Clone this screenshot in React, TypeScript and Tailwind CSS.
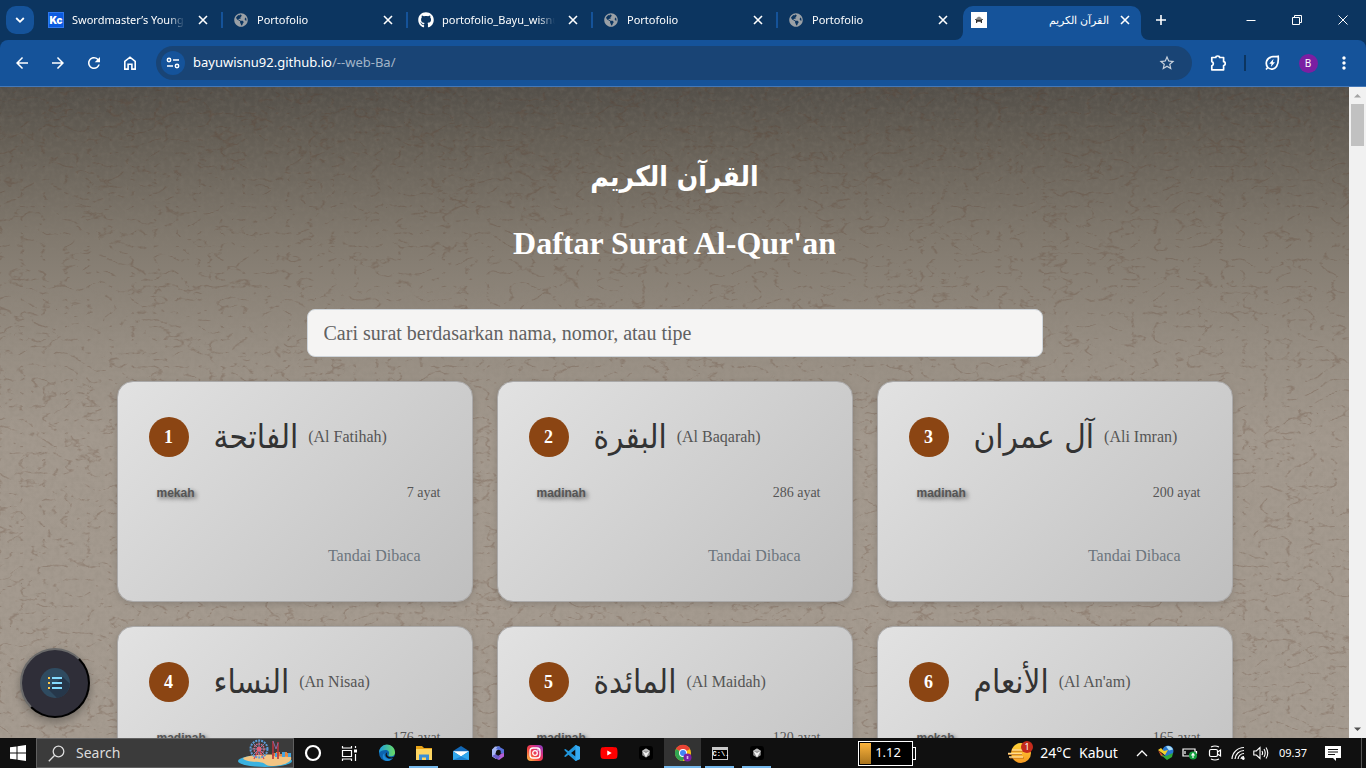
import React from "react";
import { MdArrowBack, MdArrowForward, MdRefresh, MdStarBorder, MdMoreVert } from "react-icons/md";
import { FaGithub, FaGlobeAmericas, FaYoutube } from "react-icons/fa";

type Surah = { no: number; arabic: string; latin: string; type: string; verses: number };

const surahs: Surah[] = [
  { no: 1, arabic: "الفاتحة", latin: "Al Fatihah", type: "mekah", verses: 7 },
  { no: 2, arabic: "البقرة", latin: "Al Baqarah", type: "madinah", verses: 286 },
  { no: 3, arabic: "آل عمران", latin: "Ali Imran", type: "madinah", verses: 200 },
  { no: 4, arabic: "النساء", latin: "An Nisaa", type: "madinah", verses: 176 },
  { no: 5, arabic: "المائدة", latin: "Al Maidah", type: "madinah", verses: 120 },
  { no: 6, arabic: "الأنعام", latin: "Al An'am", type: "mekah", verses: 165 },
];

function CloseIcon({ className = "size-[10px]" }: { className?: string }) {
  return (
    <svg viewBox="0 0 10 10" className={className} fill="none" stroke="currentColor" strokeWidth="1.6">
      <path d="M1 1l8 8M9 1L1 9" />
    </svg>
  );
}

function KcIcon() {
  return (
    <span className="flex size-4 items-center justify-center border border-[#2f78ee] bg-[#0b5be0] font-['Inter',sans-serif] text-[10px] font-black text-white">
      Kc
    </span>
  );
}

function Tab({ title, icon, last }: { title: string; icon: React.ReactNode; last?: boolean }) {
  return (
    <div className="flex h-10 min-w-0 basis-[185px] items-center pl-[10px]">
      <span className="mr-2 flex size-4 shrink-0 items-center justify-center">{icon}</span>
      <span className="min-w-0 flex-1 overflow-hidden whitespace-nowrap text-[11px] text-white [mask-image:linear-gradient(to_right,black_85%,transparent)]">
        {title}
      </span>
      <button aria-label="Tutup tab" className="ml-2 flex size-5 shrink-0 items-center justify-center text-white">
        <CloseIcon />
      </button>
      <span className={last ? "ml-2 w-[2px]" : "ml-2 h-4 w-[2px] bg-[#15539a]"} />
    </div>
  );
}

function TitleBar() {
  const globe = <FaGlobeAmericas className="size-[14px] text-[#9aa0a6]" />;
  return (
    <header className="flex h-10 shrink-0 items-center bg-[#0c3560]">
      <button aria-label="Cari tab" className="ml-[6px] mr-1 flex size-7 shrink-0 items-center justify-center rounded-[10px] bg-[#15539a] text-white">
        <svg viewBox="0 0 10 10" className="size-[10px]" fill="none" stroke="currentColor" strokeWidth="1.8">
          <path d="M1.2 3l3.8 3.8L8.8 3" />
        </svg>
      </button>
      <Tab title="Swordmaster’s Young" icon={<KcIcon />} />
      <Tab title="Portofolio" icon={globe} />
      <Tab title="portofolio_Bayu_wisnu" icon={<FaGithub className="size-4 text-white" />} />
      <Tab title="Portofolio" icon={globe} />
      <Tab title="Portofolio" icon={globe} last />
      <div className="relative flex h-[34px] min-w-0 basis-[178px] items-center self-end rounded-t-[10px] bg-[#15539a] pb-[6px] pl-2 pr-[6px]">
        <svg viewBox="0 0 8 8" className="absolute -left-2 bottom-0 size-2" fill="#15539a"><path d="M8 0v8H0a8 8 0 0 0 8-8z" /></svg>
        <svg viewBox="0 0 8 8" className="absolute -right-2 bottom-0 size-2" fill="#15539a"><path d="M0 0v8h8a8 8 0 0 1-8-8z" /></svg>
        <svg viewBox="0 0 16 16" className="size-4 shrink-0">
          <path fill="#fff" d="M0 0h16v16H0z" />
          <path fill="#888" d="M5 7.500l.8-1.800L8 4.500l2.200 1.200.8 1.800z" />
          <path fill="#333" d="M5 7.500h6v3.500H9.800V9.800H6.200V11H5zM4.200 7h1.200v1H4.200zM10.600 7h1.200v1h-1.200z" />
        </svg>
        <span dir="rtl" className="min-w-0 flex-1 overflow-hidden whitespace-nowrap px-[6px] text-[11px] text-white">
          القرآن الكريم
        </span>
        <button aria-label="Tutup tab" className="flex size-5 shrink-0 items-center justify-center text-white">
          <CloseIcon />
        </button>
      </div>
      <button aria-label="Tab baru" className="ml-[6px] flex size-7 shrink-0 items-center justify-center text-white">
        <svg viewBox="0 0 12 12" className="size-3" fill="none" stroke="currentColor" strokeWidth="1.6"><path d="M6 1v10M1 6h10" /></svg>
      </button>
      <div className="ml-auto flex shrink-0 self-stretch text-white">
        <button aria-label="Perkecil" className="flex w-[46px] items-center justify-center">
          <svg viewBox="0 0 10 10" className="size-[10px]" stroke="currentColor"><path d="M0.500 5.500h9" /></svg>
        </button>
        <button aria-label="Pulihkan" className="flex w-[46px] items-center justify-center">
          <svg viewBox="0 0 10 10" className="size-[10px]" fill="none" stroke="currentColor"><path d="M.5 2.500h7v7h-7zM2.500 2.500v-2h7v7h-2" /></svg>
        </button>
        <button aria-label="Tutup" className="flex w-[46px] items-center justify-center">
          <svg viewBox="0 0 10 10" className="size-[10px]" fill="none" stroke="currentColor"><path d="M.5.5l9 9M9.500.5l-9 9" /></svg>
        </button>
      </div>
    </header>
  );
}

const navButton = "flex size-9 shrink-0 items-center justify-center text-white";

function Toolbar() {
  return (
    <div className="shrink-0 bg-[#0c3560]">
      <nav className="flex h-[47px] items-center rounded-t-lg border-b border-[#4478b8] bg-[#15539a] px-1">
        <button aria-label="Kembali" className={navButton}><MdArrowBack className="size-[18px]" /></button>
        <button aria-label="Maju" className={navButton}><MdArrowForward className="size-[18px]" /></button>
        <button aria-label="Muat ulang" className={navButton}><MdRefresh className="size-[18px]" /></button>
        <button aria-label="Beranda" className={navButton}>
          <svg viewBox="0 0 16 16" className="size-4" fill="none" stroke="currentColor" strokeWidth="1.6"><path d="M2.800 6.300L8 2.200l5.200 4.100v7.800H9.900V9.300H6.100v4.800H2.800z" /></svg>
        </button>
        <div className="ml-2 mr-2 flex h-[34px] min-w-0 flex-1 items-center rounded-full bg-[#194475] pl-[5px] pr-4">
          <button aria-label="Informasi situs" className="flex size-6 shrink-0 items-center justify-center rounded-full bg-[#15539a] text-white">
            <svg viewBox="0 0 14 14" className="size-[14px]" fill="none" stroke="currentColor" strokeWidth="1.5">
              <circle cx="3" cy="4" r="1.700" /><path d="M7 4h6M1 10h6" /><circle cx="11" cy="10" r="1.700" />
            </svg>
          </button>
          <div className="ml-2 flex min-w-0 flex-1 whitespace-nowrap text-[13px] text-white">
            <span>bayuwisnu92.github.io</span><span className="text-[#a3b4c8]">/--web-Ba/</span>
          </div>
          <button aria-label="Tandai halaman" className="text-[#c9d2dd]"><MdStarBorder className="size-[18px]" /></button>
        </div>
        <button aria-label="Ekstensi" className={navButton}>
          <svg viewBox="0 0 18 18" className="size-[18px]" fill="none" stroke="currentColor" strokeWidth="1.7" strokeLinejoin="round">
            <path d="M2.800 3.500h4a1.900 1.500 0 0 1 3.800 0h4v4.200a1.600 1.900 0 0 1 0 3.800v4.300H2.800v-4a2.200 2.200 0 0 0 0-4.200z" />
          </svg>
        </button>
        <span className="mx-2 h-4 w-[2px] bg-[#0c3560]" />
        <button aria-label="Penghemat energi" className={navButton}>
          <svg viewBox="0 0 18 18" className="size-[18px]" fill="none" stroke="currentColor" strokeWidth="1.700">
            <path d="M3 15.500l1.800-2C2 10 3 3 10 2.700c2.200-.1 4-.2 5.200-.4.300 3 .2 7.300-1.700 10.200-2 3-6 3.500-8.700 1" />
            <path d="M10.500 4.800L6.300 9.700h2.200l-.7 3.200L12 8.300H9.800z" fill="currentColor" stroke="none" />
          </svg>
        </button>
        <button aria-label="Profil" className={navButton}>
          <span className="flex size-[19px] items-center justify-center rounded-full bg-[#7b1fa2] text-[10px] text-white">B</span>
        </button>
        <button aria-label="Menu" className={navButton}><MdMoreVert className="size-5" /></button>
      </nav>
    </div>
  );
}

function PaperTexture() {
  return (
    <svg className="absolute inset-0 size-full" aria-hidden="true">
      <defs>
        <filter id="veins" x="0" y="0" width="100%" height="100%" colorInterpolationFilters="sRGB">
          <feTurbulence type="turbulence" baseFrequency="0.045 0.075" numOctaves="3" seed="11" />
          <feColorMatrix values="0 0 0 0 0.350  0 0 0 0 0.220  0 0 0 0 0.150  -8 0 0 0 1.300" />
        </filter>
        <filter id="grain" x="0" y="0" width="100%" height="100%">
          <feTurbulence type="fractalNoise" baseFrequency="0.200" numOctaves="3" seed="3" />
          <feColorMatrix values="0 0 0 0 0.250  0 0 0 0 0.220  0 0 0 0 0.180  1.600 0 0 0 -0.600" />
        </filter>
      </defs>
      <rect width="100%" height="100%" filter="url(#grain)" opacity="0.250" />
      <rect width="100%" height="100%" filter="url(#veins)" opacity="0.220" />
    </svg>
  );
}

function SurahCard({ s }: { s: Surah }) {
  return (
    <article className="flex flex-col rounded-2xl border border-[#aaa9a9] bg-linear-135 from-[#e2e2e2] to-[#bfbfbf] px-[31px] py-[25px] shadow-[0_2px_6px_rgba(0,0,0,0.15)]">
      <div className="flex h-[60px] items-center">
        <span className="flex size-10 shrink-0 items-center justify-center rounded-full bg-[#8b4513] text-lg font-bold text-white">{s.no}</span>
        <h3 lang="ar" dir="rtl" className="ml-[25px] whitespace-nowrap font-['DejaVu_Sans_Condensed','DejaVu_Sans',sans-serif] text-[33px] leading-[56px] text-[#333]">{s.arabic}</h3>
        <span className="ml-[10px] whitespace-nowrap text-base text-[#555]">({s.latin})</span>
      </div>
      <div className="mt-4 flex h-5 items-center justify-between">
        <span className="px-2 font-['Liberation_Sans',sans-serif] text-xs font-bold text-[#555] [text-shadow:2px_2px_4px_rgba(0,0,0,0.6)]">{s.type}</span>
        <span className="text-sm text-[#555]">{s.verses} ayat</span>
      </div>
      <button className="mt-8 h-[41px] self-end px-5 text-base text-[#6c757d]">Tandai Dibaca</button>
    </article>
  );
}

function Page() {
  return (
    <main className="relative min-w-0 flex-1 overflow-hidden bg-[linear-gradient(to_bottom,#534f49_0px,#645e55_50px,#81796e_150px,#978e83_260px,#a3998e_350px,#a59b90_100%)] font-['Liberation_Serif',serif]">
      <PaperTexture />
      <div className="relative flex flex-col items-center px-4">
        <h1 lang="ar" dir="rtl" className="mt-16 font-['DejaVu_Sans_Condensed','DejaVu_Sans',sans-serif] text-[28px] font-bold leading-[52px] text-white">القرآن الكريم</h1>
        <h2 className="mt-5 text-[32px] font-bold leading-[40px] text-white">Daftar Surat Al-Qur'an</h2>
        <input
          type="text"
          aria-label="Cari surat"
          placeholder="Cari surat berdasarkan nama, nomor, atau tipe"
          className="mt-[46px] h-12 w-full max-w-[736px] rounded-lg border border-[#ced4da] bg-[#f5f4f3] px-4 text-xl text-[#333] placeholder:text-[#616161] placeholder:opacity-100"
        />
        <section className="mt-6 grid w-full max-w-[1116px] grid-cols-3 gap-6">
          {surahs.map((s) => <SurahCard key={s.no} s={s} />)}
        </section>
      </div>
      <button aria-label="Daftar" className="absolute bottom-5 left-5 flex size-[70px] items-center justify-center rounded-full border-2 border-b-black border-l-[#6a6a6a] border-r-black border-t-[#6a6a6a] bg-[#2f2e38] shadow-[0_4px_8px_rgba(0,0,0,0.3)]">
        <svg viewBox="0 0 30 30" className="size-[30px]">
          <circle cx="15" cy="15" r="15" fill="#2f4b60" />
          <path d="M23 9l6.800 6.800A15 15 0 0 1 17 29.900L8 21z" fill="#26374a" />
          <path fill="#fdc84b" d="M8 9h2v2H8zM8 14h2v2H8zM8 19h2v2H8z" />
          <path fill="#84dbff" d="M12 9h10v2H12zM12 14h10v2H12zM12 19h10v2H12z" />
        </svg>
      </button>
    </main>
  );
}

function Scrollbar() {
  return (
    <div className="flex w-[17px] shrink-0 flex-col items-center bg-[#f1f1f1]">
      <svg viewBox="0 0 17 17" className="size-[17px]"><path d="M5 10.500L8.500 7l3.500 3.500z" fill="#a3a3a3" /></svg>
      <span className="h-[42px] w-[13px] bg-[#c1c1c1]" />
      <svg viewBox="0 0 17 17" className="mt-auto size-[17px]"><path d="M5 6.500L8.500 10 12 6.500z" fill="#505050" /></svg>
    </div>
  );
}

function FairArt() {
  return (
    <svg viewBox="0 0 56 28" className="h-7 w-14">
      <ellipse cx="28" cy="22" rx="27" ry="6" fill="#3bb2e0" />
      <path d="M6 19c10-5 38-4 48-1 2 5-8 9-20 9-6 0-4-3-12-4-8 0-15-1-16-4z" fill="#f3c583" />
      <path d="M35 17v-3h4v-1h4v2h3v-2h4v1h4v4z" fill="#e8853f" />
      <path d="M38 14h2v4h-2zM45 13h3v5h-3zM51 14h3v4h-3z" fill="#48a5dc" />
      <path d="M22 10l-5 10M22 10l5 10" stroke="#d64550" strokeWidth="1.200" />
      <circle cx="22" cy="10" r="8.500" fill="none" stroke="#5b9bd8" strokeWidth="2" strokeDasharray="2 1" />
      <path d="M22 2v16M14 10h16M16.500 4.500l11 11M27.500 4.500l-11 11" stroke="#7fa0d4" strokeWidth=".8" />
      <circle cx="22" cy="10" r="5" fill="none" stroke="#dc6c86" strokeWidth="1.500" strokeDasharray="1.500 1" />
      <circle cx="22" cy="10" r="2.500" fill="#e2607c" />
      <path d="M36 2v18M41 3v17" stroke="#b8323c" strokeWidth="1.600" fill="none" />
      <path d="M36 2l3 8 2-6" stroke="#8d6aa0" strokeWidth="1" fill="none" />
    </svg>
  );
}

const CubeIcon = () => (
  <svg viewBox="0 0 16 16" className="size-4">
    <rect x="1" y="1" width="14" height="14" rx="3" fill="#000" />
    <path d="M8 3.500l3.800 2.200v4.600L8 12.500l-3.800-2.200V5.700z" fill="#8c8c8c" />
    <path d="M4.200 5.700L8 8l3.800-2.300L8 12.500z" fill="#eee" /><path d="M4.200 5.700L8 3.500l3.800 2.200L8 6.500z" fill="#bbb" />
  </svg>
);

const apps: { name: string; icon: React.ReactNode; open?: boolean; active?: boolean }[] = [
  { name: "Cortana", icon: <svg viewBox="0 0 18 18" className="size-[18px]"><circle cx="9" cy="9" r="7" fill="none" stroke="#fff" strokeWidth="2.200" /></svg> },
  { name: "Task View", icon: (
    <svg viewBox="0 0 17 17" className="size-[17px]" fill="none" stroke="#fff" strokeWidth="1.200">
      <path d="M1.500 5.500h9v6h-9zM1.500 1v2h9V1M1.500 16v-2h9v2M14.500 1v2M14.500 9v7" /><path d="M13 4.500h3v3h-3z" fill="#fff" stroke="none" />
    </svg>) },
  { name: "Edge", icon: (
    <svg viewBox="0 0 18 18" className="size-[18px]">
      <defs><linearGradient id="edge" x1="0" x2="1"><stop stopColor="#1b9de2" /><stop offset="1" stopColor="#6bdd62" /></linearGradient></defs>
      <circle cx="9" cy="9" r="8" fill="#0c63ae" />
      <path d="M1 9a8 8 0 0 1 16-1c.4 3-2 4.500-4.500 4.300-2.400-.1-2.200-1.300-1.500-2.300.8-2-1-4-3.500-4S2 7 1 9z" fill="url(#edge)" />
      <path d="M6.500 9c-1 5 4 7.500 8.500 4.800-2 3.200-6 4.200-9 2C4 13.500 4.500 10.500 6.500 9z" fill="#1d8bd6" />
      <path d="M9.300 8.500c-1.500 1.700.2 4.300 2.700 4.800 2 .4 3.500-.2 4.500-1l-.6 1.400c-3 2-8.300.6-8.300-3 0-1 .8-1.900 1.700-2.200z" fill="#111" />
    </svg>) },
  { name: "File Explorer", open: true, icon: (
    <svg viewBox="0 0 18 16" className="h-4 w-[18px]">
      <path d="M1 1h6l2 2h8v11H1z" fill="#e8a317" /><path d="M1 4h16v11H1z" fill="#fdd663" />
      <path d="M4 15V9.500h10V15h-3v-2.500H7V15z" fill="#3a8fd6" />
    </svg>) },
  { name: "Mail", icon: (
    <svg viewBox="0 0 18 16" className="h-4 w-[18px]">
      <path d="M1 6l8-5 8 5v9H1z" fill="#1267b4" /><path d="M1 6.200h16L9 11.500z" fill="#fff" />
      <path d="M1 6.200l8 5.300 8-5.300V15H1z" fill="#31a8ee" /><path d="M1 15l8-3.500 8 3.500z" fill="#1b82d2" />
    </svg>) },
  { name: "Microsoft 365", icon: (
    <svg viewBox="0 0 16 16" className="size-4">
      <path d="M5 1.500h5L5.500 8 6 14 2 11.500V4.500z" fill="#a9b8f5" /><path d="M8 1l6 3.500V9l-3.500-.5v-3L6 4z" fill="#5770d8" />
      <path d="M14 8v3.500L9 15l-4.500-2.500L10.500 9z" fill="#b45ed4" /><path d="M2 11l4-2 4.500 2L8 14.500z" fill="#6a5bc9" />
      <path d="M6.200 5.800L8.500 5l2 1.300v3l-2.300 1.500-2-1.200z" fill="#111" />
    </svg>) },
  { name: "Instagram", icon: (
    <svg viewBox="0 0 16 16" className="size-4">
      <defs><linearGradient id="ig" x1="0" y1="1" x2="1" y2="0"><stop stopColor="#fdc94b" /><stop offset=".4" stopColor="#f4443e" /><stop offset=".7" stopColor="#d22f86" /><stop offset="1" stopColor="#7a41cc" /></linearGradient></defs>
      <rect width="16" height="16" rx="4" fill="url(#ig)" />
      <g fill="none" stroke="#fff" strokeWidth="1.300"><rect x="3" y="3" width="10" height="10" rx="3" /><circle cx="8" cy="8" r="2.300" /></g><circle cx="11" cy="5" r=".8" fill="#fff" />
    </svg>) },
  { name: "VS Code", icon: (
    <svg viewBox="0 0 18 18" className="size-[18px]">
      <path d="M12.500 1L17 3v12l-4.500 2L5.500 10.700 2.500 13 1 12.200 4.200 9 1 5.800 2.500 5l3 2.300zM12.500 5.500L8 9l4.500 3.500z" fill="#2196dc" fillRule="evenodd" />
      <path d="M12.500 1L17 3v12l-4.500 2z" fill="#35aaf2" />
    </svg>) },
  { name: "YouTube", icon: <span className="relative flex"><span className="absolute inset-x-[6px] inset-y-[5px] bg-white" /><FaYoutube className="relative size-[18px] text-[#ff0000]" /></span> },
  { name: "Cursor", icon: <CubeIcon /> },
  { name: "Chrome", open: true, active: true, icon: (
    <svg viewBox="0 0 18 18" className="size-[18px]">
      <circle cx="9" cy="9" r="8" fill="#fbc116" /><path d="M9 9L2 5a8 8 0 0 1 14 0z" fill="#e94335" />
      <path d="M9 9L2 5a8 8 0 0 0 6.500 12L12 11z" fill="#31a551" /><circle cx="9" cy="9" r="4" fill="#fff" /><circle cx="9" cy="9" r="3" fill="#4285f4" />
      <circle cx="13.500" cy="13.500" r="4" fill="#7b1fa2" /><path d="M12.700 12h1.600v3h-1.600z" fill="#d9b6e8" />
    </svg>) },
  { name: "Command Prompt", open: true, icon: (
    <span className="flex h-[13px] w-4 flex-col border border-[#c8c8c8] bg-black"><span className="h-[2px] bg-[#c8c8c8]" /><span className="font-['Liberation_Mono',monospace] text-[7px] font-bold leading-[9px] text-white">C:\.</span></span>) },
  { name: "Cursor", open: true, icon: <CubeIcon /> },
];

function Taskbar() {
  return (
    <footer className="flex h-[30px] shrink-0 items-stretch bg-[#101010] text-white">
      <button aria-label="Mulai" className="flex w-9 shrink-0 items-center justify-center">
        <svg viewBox="0 0 16 16" className="size-4" fill="#fff"><path d="M0 2.300L6.500 1.400v6.100H0zM7.500 1.200L16 0v7.500H7.500zM0 8.500h6.500v6.100L0 13.700zM7.500 8.500H16V16l-8.500-1.200z" /></svg>
      </button>
      <button className="flex w-[258px] shrink-0 items-center border border-[#606060] bg-[#3b3b3b] pl-[11px] text-sm text-[#dcdcdc]">
        <svg viewBox="0 0 17 17" className="mr-[11px] size-[17px]" fill="none" stroke="currentColor" strokeWidth="1.300"><circle cx="10.500" cy="6.500" r="5.300" /><path d="M6.700 10.300L.8 16.200" /></svg>
        Search
        <span className="ml-auto"><FairArt /></span>
      </button>
      <div className="flex shrink-0">
        {apps.map((a, i) => (
          <button key={i} aria-label={a.name} className={a.active ? "relative flex w-[37px] items-center justify-center bg-[#333]" : "relative flex w-[37px] items-center justify-center"}>
            {a.icon}
            {a.open && <span className={a.active ? "absolute inset-x-0 bottom-0 h-[2px] bg-[#76b9ed]" : "absolute inset-x-1 bottom-0 h-[2px] bg-[#76b9ed]"} />}
          </button>
        ))}
      </div>
      <div className="ml-auto flex items-center pr-1">
        <div className="mr-[92px] flex items-center">
          <span className="flex h-[25px] w-[55px] items-center border border-white bg-black p-px text-[13px]">
            <span className="mr-1 h-full w-[11px] bg-linear-to-b from-[#fdb43c] to-[#a9741e]" />1.12
          </span>
          <span className="h-[13px] w-[3px] border border-l-0 border-white" />
        </div>
        <span className="relative mr-2 flex">
          <svg viewBox="0 0 24 22" className="h-[22px] w-6">
            <defs><linearGradient id="sun" y1="0" y2="1" x2="0"><stop stopColor="#ffd338" /><stop offset="1" stopColor="#f79a21" /></linearGradient></defs>
            <circle cx="13" cy="11" r="10" fill="url(#sun)" />
            <path d="M3 9h14M0 12.500h14M2 16h14" stroke="#b96a18" strokeWidth="1" /><path d="M4 8h13M0 11.500h14M1 15h14" stroke="#ffd98c" strokeWidth="1.500" />
          </svg>
          <span className="absolute -right-[1px] -top-[1px] flex size-[12px] items-center justify-center rounded-full bg-[#c42b1c] text-[9px]">1</span>
        </span>
        <span className="mr-2 text-sm">24°C</span>
        <span className="mr-[18px] text-sm">Kabut</span>
        <svg viewBox="0 0 12 8" className="mr-[10px] h-2 w-3" fill="none" stroke="#fff" strokeWidth="1.300"><path d="M1 7l5-5 5 5" /></svg>
        <svg viewBox="0 0 16 16" className="mr-2 size-4">
          <circle cx="10" cy="6" r="5.500" fill="#2878cf" /><path d="M8 1.500c3-1.500 6 .5 7 3l-4 1z" fill="#a9dcf7" />
          <path d="M0 5l3-2 3 3 4-1-3 5z" fill="#f2d02c" /><path d="M0 5l7 7-4-1z" fill="#e0572c" /><path d="M3 10l5 1 7-3-1 4-5 3z" fill="#2ea83a" />
        </svg>
        <svg viewBox="0 0 16 14" className="mr-[9px] h-[14px] w-4" fill="none" stroke="#fff" strokeWidth="1.200"><path d="M1 3h12v7H1zM14.500 5v3M3 5v3" /><circle cx="11" cy="9.500" r="4" fill="#13a03e" stroke="none" /><path d="M11 12V8M9.500 9.500L11 7.500l1.500 2" /></svg>
        <svg viewBox="0 0 16 16" className="mr-2 size-4" fill="none" stroke="#fff" strokeWidth="1.200"><rect x="2.500" y="4.500" width="8" height="7" rx="1.500" /><path d="M10.500 7L13.500 5v6l-3-2M4 2q4-2 8 0M4 14q4 2 8 0" /></svg>
        <svg viewBox="0 0 14 14" className="mr-2 size-[14px]" fill="none" stroke="#fff" strokeWidth="1.200"><path d="M1 13A12 12 0 0 1 13 1.500M4 13a9 9 0 0 1 9-8.500M7 13a6 6 0 0 1 6-5.500M10 13a3 3 0 0 1 3-2.500" /><circle cx="12.300" cy="12.500" r=".8" fill="#fff" /></svg>
        <svg viewBox="0 0 16 14" className="mr-[10px] h-[14px] w-4" fill="none" stroke="#fff" strokeWidth="1.100"><path d="M.8 5h2.500L7 1.500v11L3.300 9H.8zM9 5q1.200 2 0 4M11 3q2.400 4 0 8M13 1.500q3.500 5.500 0 11" /></svg>
        <span className="mr-[18px] text-[11px]">09.37</span>
        <svg viewBox="0 0 16 15" className="mr-5 h-[15px] w-4"><path d="M0 0h16v12h-5v3l-3-3H0z" fill="#fff" /><path d="M3 3.500h10M3 6h10M3 8.500h7" stroke="#101010" /></svg>
        <span className="h-[30px] w-px bg-[#555]" />
      </div>
    </footer>
  );
}

export default function App() {
  return (
    <div className="flex h-screen flex-col overflow-hidden font-['Noto_Sans',sans-serif]">
      <TitleBar />
      <Toolbar />
      <div className="flex min-h-0 flex-1">
        <Page />
        <Scrollbar />
      </div>
      <Taskbar />
    </div>
  );
}
